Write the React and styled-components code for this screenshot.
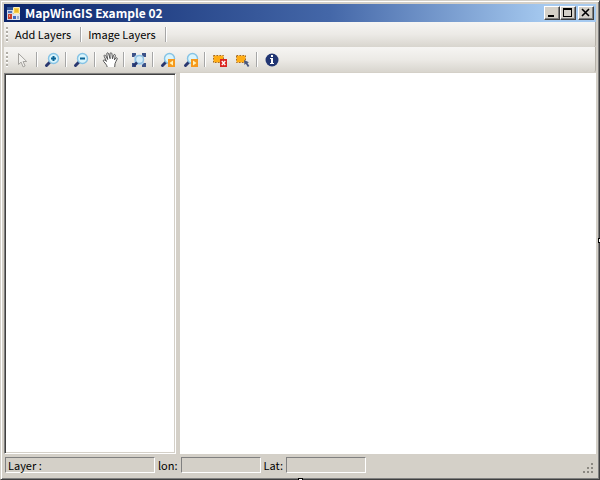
import React from "react"
import styled, { createGlobalStyle } from "styled-components"

const GlobalStyle = createGlobalStyle`
  * {
    box-sizing: border-box;
  }

  body {
    margin: 0;
    background: #d4d0c8;
    color: #000;
    font: 11px/16px "Noto Sans CJK JP", "Noto Sans", sans-serif;
  }

  button {
    font: inherit;
    color: inherit;
  }
`

const Window = styled.div`
  position: relative;
  min-height: 100vh;
  padding: 1px;
  display: flex;
  flex-direction: column;
  background: #d4d0c8;
  border: 1px solid;
  border-color: #d4d0c8 #404040 #404040 #d4d0c8;
  box-shadow: inset 1px 1px #fff, inset -1px -1px #808080;
`

const WindowBody = styled.div`
  flex: 1;
  padding: 2px;
  display: flex;
  flex-direction: column;
`

const TitleBar = styled.header`
  height: 18px;
  padding: 0 2px;
  display: flex;
  align-items: center;
  background: linear-gradient(to right, #0a246a, #4467a8 55%, #a6caf0 92%);
`

const Title = styled.h1`
  flex: 1;
  margin: 0 0 0 4px;
  color: #fff;
  font: bold 12px/16px "Noto Sans CJK JP", "Noto Sans", sans-serif;
`

const CaptionButtons = styled.div`
  display: flex;
`

const CaptionButton = styled.button`
  width: 16px;
  height: 14px;
  margin-left: ${props => (props.$apart ? "2px" : "0")};
  padding: 0;
  background: #d4d0c8;
  border: 1px solid;
  border-color: #fff #404040 #404040 #fff;
  box-shadow: inset -1px -1px #808080;

  svg {
    display: block;
  }
`

const Strip = styled.div`
  height: 25px;
  padding-left: 2px;
  display: flex;
  align-items: center;
  background: linear-gradient(#f6f5f3, #eceae6 50%, #d8d5ce);
  border-radius: 0 0 2px 0;
  border-right: 1px solid #b4b0a8;
`

const Grip = styled.span`
  width: 2px;
  height: 15px;
  margin-right: 3px;
  background: repeating-linear-gradient(#b0ada6 0 2px, #fff 2px 3px, transparent 3px 4px);
`

const Separator = styled.span`
  width: 2px;
  height: 15px;
  margin: 0 2px;
  background: linear-gradient(to right, #a6a6a6 1px, #fff 1px);
`

const MenuButton = styled.button`
  height: 22px;
  padding: 0 4px 2px;
  background: none;
  border: 0;
  line-height: 20px;
`

const MenuGap = styled.span`
  width: 3px;
`

const ToolButton = styled.button`
  width: 23px;
  height: 22px;
  padding: 0;
  display: flex;
  align-items: center;
  justify-content: center;
  background: none;
  border: 0;
`

const Workspace = styled.main`
  flex: 1;
  padding-top: 1px;
  display: flex;
`

const Legend = styled.section`
  width: 172px;
  background: #fff;
  border: 1px solid;
  border-color: #808080 #fff #fff #808080;
  box-shadow: inset 1px 1px #404040, inset -1px -1px #d4d0c8;
`

const MapView = styled.section`
  flex: 1;
  margin-left: 4px;
  background: #fff;
`

const StatusBar = styled.footer`
  height: 22px;
  padding: 0 2px 0 1px;
  display: flex;
  align-items: center;
`

const StatusField = styled.output`
  width: ${props => props.$width};
  height: 16px;
  padding-left: 2px;
  line-height: 14px;
  border: 1px solid;
  border-color: #808080 #fff #fff #808080;
`

const StatusLabel = styled.label`
  padding: 0 3px;
  line-height: 16px;
`

const SizeGrip = styled.svg`
  margin: 6px 0 0 auto;
`

const Handle = styled.span`
  position: absolute;
  width: 5px;
  height: 5px;
  background: #fff;
  border: 1px solid #000;
`

const RightHandle = styled(Handle)`
  top: 50%;
  right: -4px;
  margin-top: -2px;
`

const BottomHandle = styled(Handle)`
  left: 50%;
  bottom: -4px;
  margin-left: -2px;
`

const Icon = ({ children }) => (
  <svg width="16" height="16" viewBox="0 0 16 16" aria-hidden="true">
    {children}
  </svg>
)

const AppIcon = () => (
  <svg width="15" height="15" viewBox="0 0 15 15" aria-hidden="true">
    <path d="M1 1h6v4H1z" fill="#2f5395" />
    <path d="M1 4h6v10H1z" fill="#c9d3e6" />
    <path d="M6 8h8v6H6z" fill="#dfe5ef" />
    <path d="M2 5h4v2H2z" fill="#4f74bd" />
    <path d="M2 8h4v5H2z" fill="#c8402c" />
    <path d="M3 9h1v2H3z" fill="#f0917c" />
    <path d="M7.5 1.5h6v6h-6z" fill="#f6cf4c" stroke="#fbeec0" />
    <path d="M9 3h3v3H9z" fill="#eeb92c" />
    <path d="M7 10h3v3H7z" fill="#426bc1" />
    <path d="M11 10h2v3h-2z" fill="#9badd0" />
  </svg>
)

const PointerIcon = () => (
  <Icon>
    <path d="M3.5 1.5v11l2.6-2.4 2 4.8 2-.9-2-4.5h3.6z" fill="#f2f1ee" stroke="#a5a39f" />
  </Icon>
)

const Magnifier = ({ sign }) => (
  <>
    <path d="M6.2 9.8 2.5 13.5" stroke="#29376f" strokeWidth="3" strokeLinecap="round" />
    <circle cx="9.5" cy="6.5" r="5" fill="#d9f4fc" stroke="#86c3e4" strokeWidth="1.4" />
    {sign && <path d={sign} stroke="#0b6496" strokeWidth="2" />}
  </>
)

const ZoomInIcon = () => (
  <Icon>
    <Magnifier sign="M7 6.5h5M9.5 4v5" />
  </Icon>
)

const ZoomOutIcon = () => (
  <Icon>
    <Magnifier sign="M7 6.5h5" />
  </Icon>
)

const PanIcon = () => (
  <Icon>
    <path
      d="M5.2 15c-.4-2-1.7-3.4-3.5-5.4-1.1-1.2.2-2.2 1.3-1.4l1.5 1.2L2.2 4.3c-.5-1.3 1-1.8 1.5-.7l2 3.9L4.8 2c-.2-1.4 1.4-1.6 1.8-.3l1.5 5L8 1.8C8 .5 9.7.4 9.9 1.7l.6 5.1 1.1-3.6c.4-1.3 2-.8 1.7.4l-.9 4.3 1.3-1.8c.9-.8 1.9-.1 1.4 1-1 2-1.6 3.1-2.1 4.6L12.7 15"
      fill="#fff"
      stroke="#444"
      strokeWidth=".9"
    />
  </Icon>
)

const ExtentsIcon = () => (
  <Icon>
    <path d="M3 3h10v10H3z" fill="#b9d7ee" />
    <circle cx="8.5" cy="7.5" r="4" fill="#d5edf8" stroke="#8fc0e2" strokeWidth="1.5" />
    <path d="M1 1h4v2L3 5H1zM11 1h4v4h-2l-2-2zM1 11h2l2 2v2H1zM13 11h2v4h-4v-2z" fill="#3d5288" />
    <path d="M6 10.5 2.5 14" stroke="#29376f" strokeWidth="2.6" />
  </Icon>
)

const PreviousIcon = () => (
  <Icon>
    <Magnifier />
    <path d="M8 7h7v8H8z" fill="#f6991d" />
    <path d="M13 8.5v5L9.5 11z" fill="#fff2b8" />
  </Icon>
)

const NextIcon = () => (
  <Icon>
    <Magnifier />
    <path d="M8 7h7v8H8z" fill="#f6991d" />
    <path d="M10 8.5v5l3.5-2.5z" fill="#fff2b8" />
  </Icon>
)

const ClearSelectionIcon = () => (
  <Icon>
    <path d="M1.5 3.5h10v7h-10z" fill="#ffad16" stroke="#a0692a" strokeDasharray="1.5 1.5" />
    <path d="M8 7h7v8H8z" fill="#da2520" />
    <path d="m9.8 9 3.5 4m0-4-3.5 4" stroke="#fff" strokeWidth="1.3" />
  </Icon>
)

const SelectIcon = () => (
  <Icon>
    <path d="M1.5 3.5h9v7h-9z" fill="#ffad16" stroke="#a0692a" strokeDasharray="1.5 1.5" />
    <path d="m9 8 .5 5 1.3-1.2 2 3.2 1.6-1-2-3 1.6-.7z" fill="#46557f" />
  </Icon>
)

const InfoIcon = () => (
  <Icon>
    <circle cx="8" cy="8" r="6.5" fill="#223673" />
    <path d="M7 3h2v2H7zM6 6h3v5h1v1H6v-1h1V7H6z" fill="#fff" />
  </Icon>
)

const toolGroups = [
  [["Pointer", PointerIcon]],
  [["Zoom in", ZoomInIcon]],
  [["Zoom out", ZoomOutIcon]],
  [["Pan", PanIcon]],
  [["Full extents", ExtentsIcon]],
  [["Previous extents", PreviousIcon], ["Next extents", NextIcon]],
  [["Clear selection", ClearSelectionIcon], ["Select", SelectIcon]],
  [["Identify", InfoIcon]],
]

const App = () => (
  <>
    <GlobalStyle />
    <Window>
      <WindowBody>
        <TitleBar>
          <AppIcon />
          <Title>MapWinGIS Example 02</Title>
          <CaptionButtons>
            <CaptionButton aria-label="Minimize">
              <svg width="14" height="12" viewBox="0 0 14 12">
                <path d="M3 8h6v2H3z" />
              </svg>
            </CaptionButton>
            <CaptionButton aria-label="Maximize">
              <svg width="14" height="12" viewBox="0 0 14 12">
                <path d="M2 1h9v9H2zM3 3v6h7V3z" fillRule="evenodd" />
              </svg>
            </CaptionButton>
            <CaptionButton aria-label="Close" $apart>
              <svg width="14" height="12" viewBox="0 0 14 12">
                <path d="m3 2 7 7m0-7L3 9" stroke="#000" strokeWidth="1.6" />
              </svg>
            </CaptionButton>
          </CaptionButtons>
        </TitleBar>
        <Strip as="nav">
          <Grip />
          <MenuButton>Add Layers</MenuButton>
          <MenuGap />
          <Separator />
          <MenuButton>Image Layers</MenuButton>
          <MenuGap />
          <Separator />
        </Strip>
        <Strip role="toolbar" aria-label="Map tools">
          <Grip />
          {toolGroups.map((group, index) => (
            <React.Fragment key={index}>
              {index > 0 && <Separator />}
              {group.map(([name, ToolIcon]) => (
                <ToolButton key={name} aria-label={name}>
                  <ToolIcon />
                </ToolButton>
              ))}
            </React.Fragment>
          ))}
        </Strip>
        <Workspace>
          <Legend aria-label="Legend" />
          <MapView aria-label="Map" />
        </Workspace>
        <StatusBar>
          <StatusField $width="150px">Layer :</StatusField>
          <StatusLabel htmlFor="lon">lon:</StatusLabel>
          <StatusField id="lon" $width="80px" />
          <StatusLabel htmlFor="lat">Lat:</StatusLabel>
          <StatusField id="lat" $width="80px" />
          <SizeGrip width="12" height="12" viewBox="0 0 12 12" aria-hidden="true">
            <path
              d="M9 1h2v2H9zM9 5h2v2H9zM9 9h2v2H9zM5 5h2v2H5zM5 9h2v2H5zM1 9h2v2H1z"
              fill="#8c8982"
            />
          </SizeGrip>
        </StatusBar>
      </WindowBody>
      <RightHandle />
      <BottomHandle />
    </Window>
  </>
)

export default App
